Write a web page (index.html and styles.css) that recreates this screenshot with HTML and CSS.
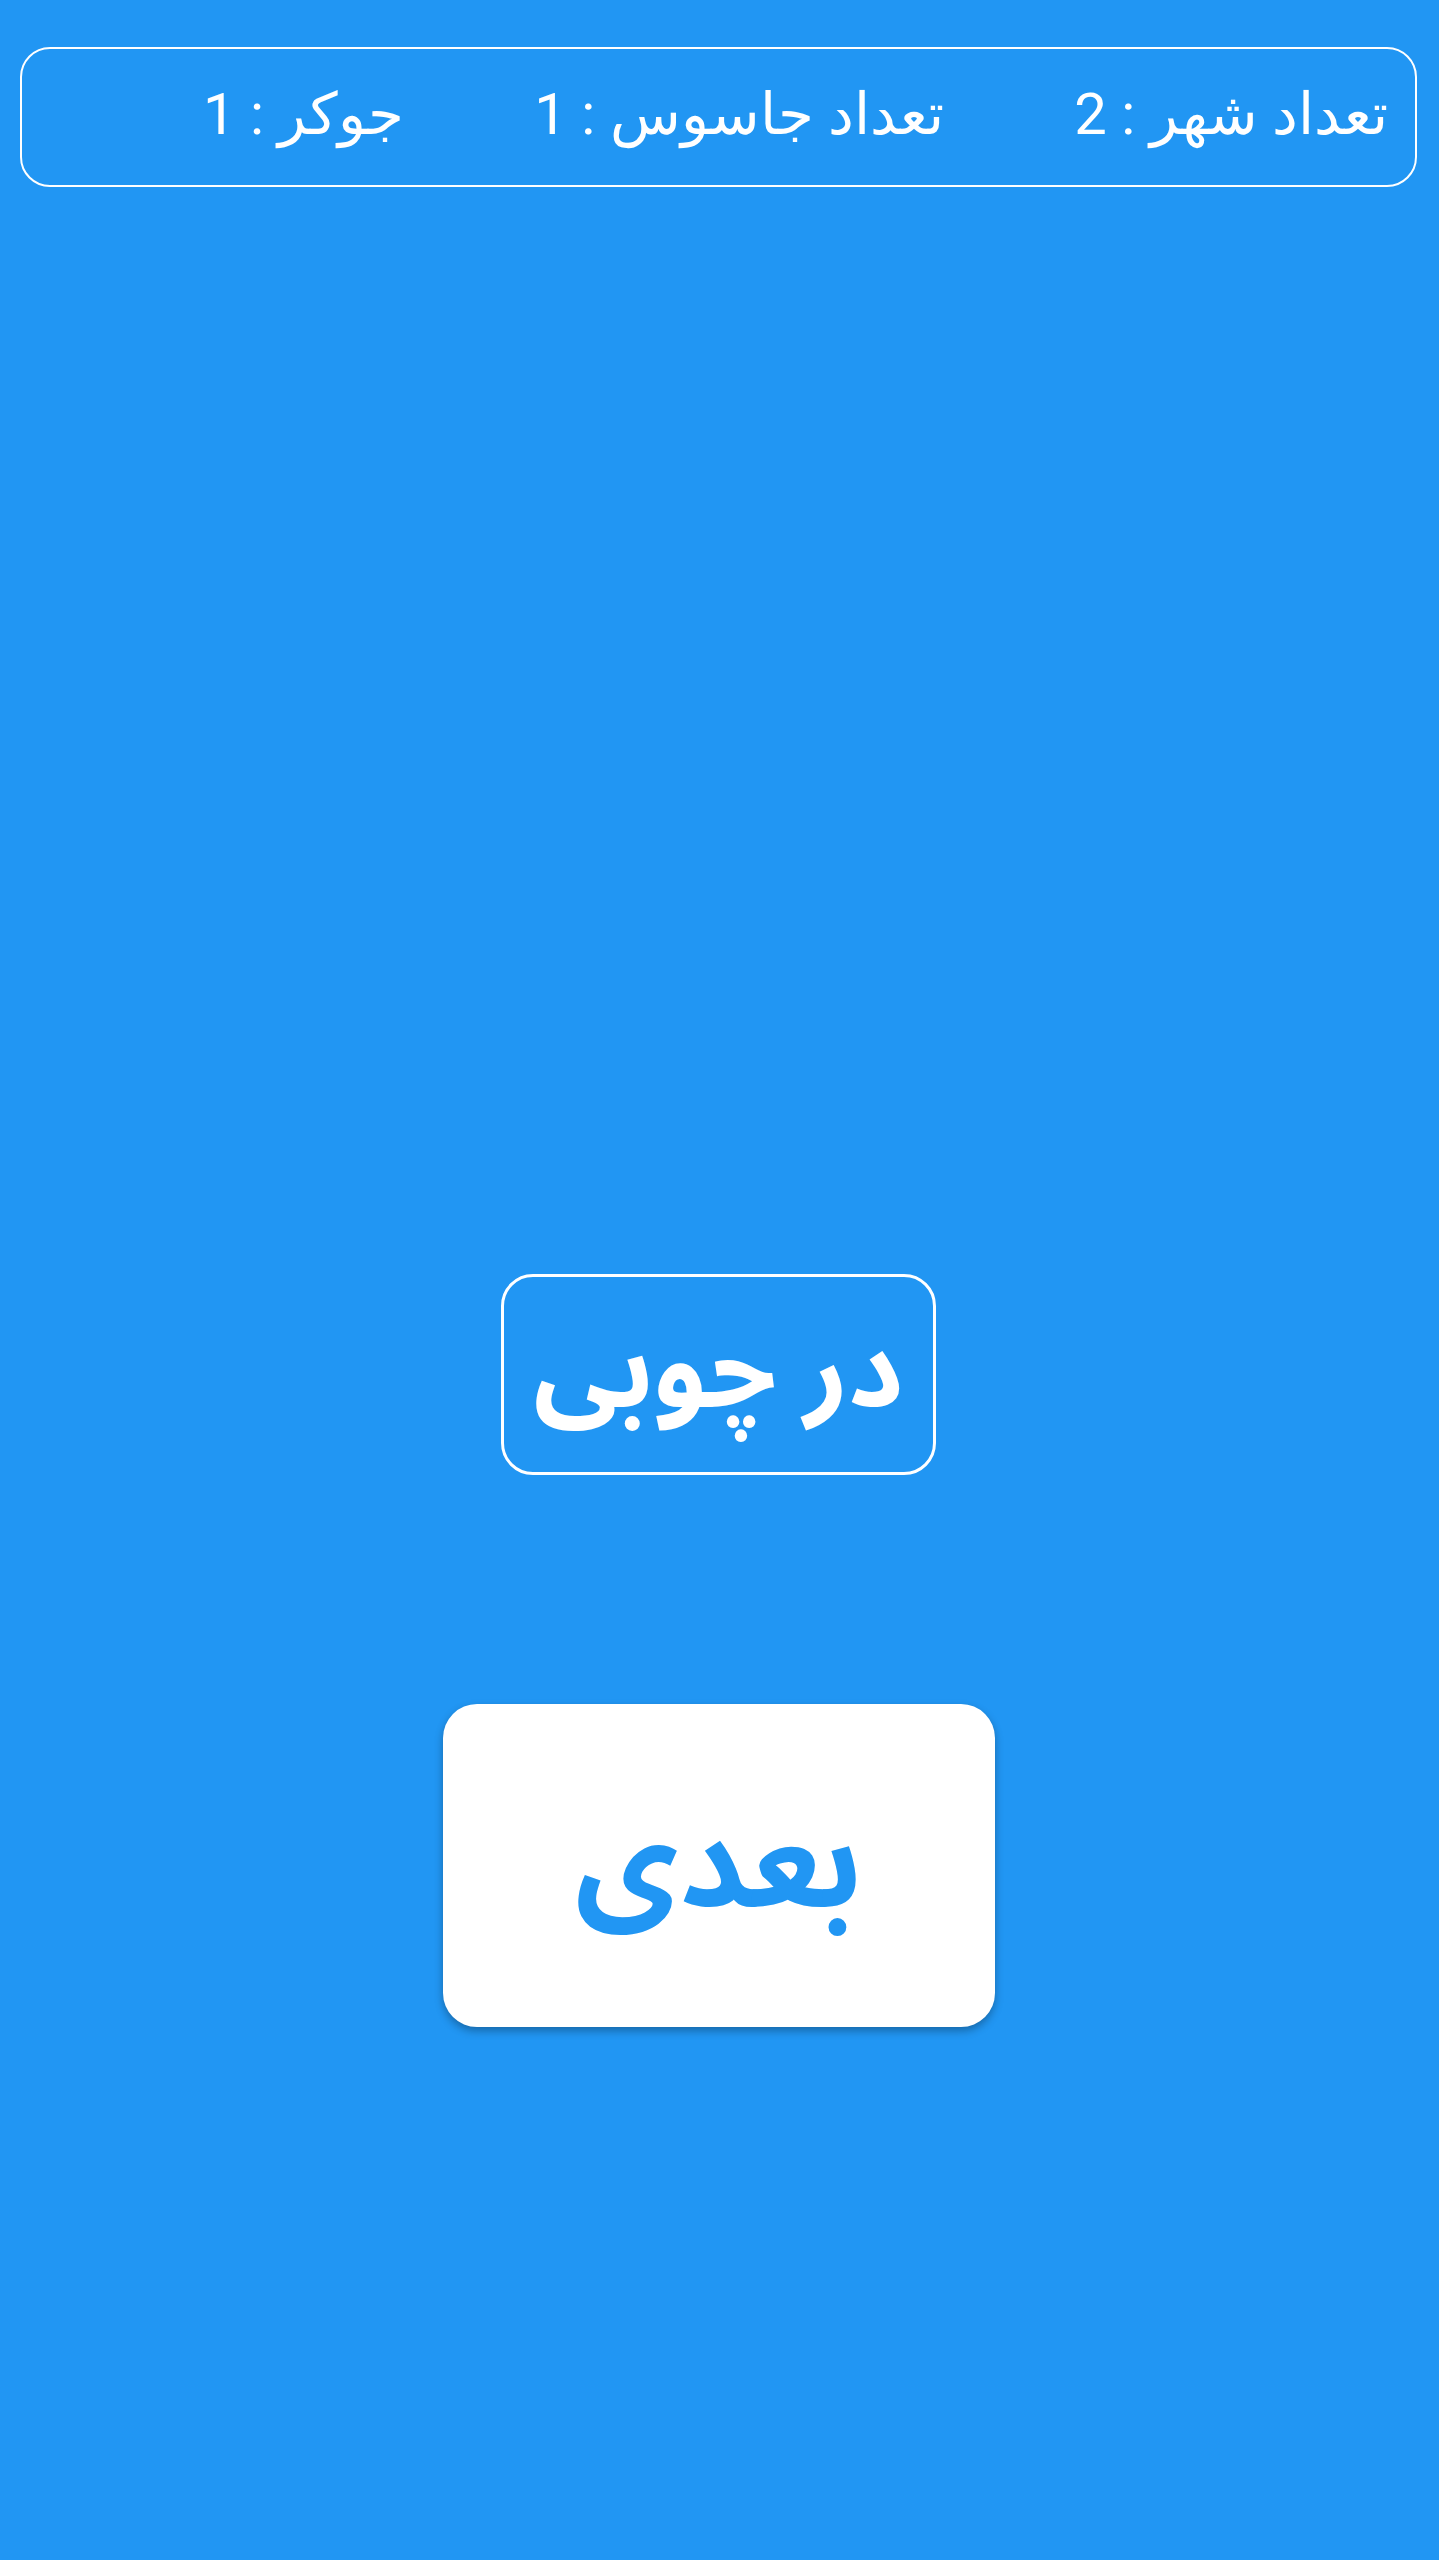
FILE: index.html
```html
<!DOCTYPE html>
<html lang="fa" dir="rtl">
  <head>
    <meta charset="UTF-8" />
    <meta name="viewport" content="width=device-width, initial-scale=1.0" />
    <title>جاسوس</title>
    <link rel="stylesheet" href="styles.css">
  </head>
  <body>
    <div class="screen">
      <div class="counts">
        <span class="count">تعداد شهر : 2</span>
        <span class="count">تعداد جاسوس : 1</span>
        <span class="count">جوکر : 1</span>
      </div>
      <div class="word-card">در چوبی</div>
      <button class="next-button">بعدی</button>
    </div>
  </body>
</html>
```

FILE: styles.css
```css
body {
  margin: 0;
  background-color: #2196f3;
  color: #fff;
  font-family: Roboto, sans-serif;
}
.screen {
  display: flex;
  flex-direction: column;
  align-items: center;
  min-height: 2560px;
  padding: 47px 22px 0 20px;
  box-sizing: border-box;
}
.counts {
  align-self: stretch;
  display: flex;
  align-items: center;
  gap: 130px;
  height: 140px;
  box-sizing: border-box;
  padding: 0 27px 6px;
  border: 2px solid #fff;
  border-radius: 30px;
  font-size: 58px;
  white-space: nowrap;
}
.word-card {
  margin-top: 1087px;
  padding: 0 30px 6px;
  height: 201px;
  box-sizing: border-box;
  display: flex;
  align-items: center;
  border: 3px solid #fff;
  border-radius: 32px;
  font-family: 'Noto Sans Arabic', Roboto, sans-serif;
  font-size: 107px;
  font-weight: bold;
}
.next-button {
  margin-top: 229px;
  width: 552px;
  height: 323px;
  border: none;
  border-radius: 34px;
  background-color: #fff;
  color: #2196f3;
  font-family: 'Noto Sans Arabic', Roboto, sans-serif;
  font-size: 127px;
  font-weight: bold;
  box-shadow: 0 4px 8px rgba(0, 0, 0, 0.3);
}
```
